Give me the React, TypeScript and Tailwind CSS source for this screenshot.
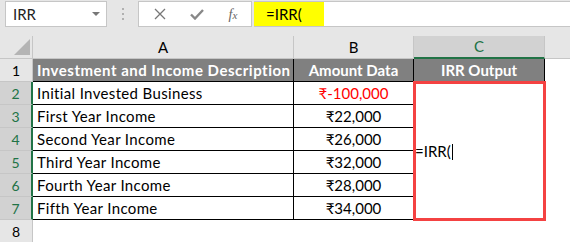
import React from "react";

const font = { fontFamily: "Lato, 'Noto Sans', 'DejaVu Sans', sans-serif" };

const rows = [
  { label: "Initial Invested Business", amount: "₹-100,000", negative: true },
  { label: "First Year Income", amount: "₹22,000" },
  { label: "Second Year Income", amount: "₹26,000" },
  { label: "Third Year Income", amount: "₹32,000" },
  { label: "Fourth Year Income", amount: "₹28,000" },
  { label: "Fifth Year Income", amount: "₹34,000" },
];

function FormulaBar() {
  return (
    <div className="flex h-[36px] items-start gap-0 pt-px">
      {/* Name box */}
      <div className="ml-[5px] flex h-[26px] w-[102px] items-center justify-between border border-[#c6c6c6] bg-white pl-[7px] pr-[6px]">
        <span className="text-[15px] text-[#222]">IRR</span>
        <svg width="8" height="5" viewBox="0 0 8 5">
          <path d="M0 0 L8 0 L4 4 Z" fill="#777" />
        </svg>
      </div>
      {/* grip */}
      <div className="flex h-[26px] w-[31px] flex-col items-center justify-center gap-[3px]">
        <div className="h-[2px] w-[2px] bg-[#b0b0b0]" />
        <div className="h-[2px] w-[2px] bg-[#b0b0b0]" />
        <div className="h-[2px] w-[2px] bg-[#b0b0b0]" />
      </div>
      {/* buttons */}
      <div className="flex h-[26px] w-[114px] items-center border border-[#c6c6c6] bg-white">
        <div className="flex w-[40px] justify-center pl-[2px]">
          <svg width="12" height="12" viewBox="0 0 12 12">
            <path d="M1 1 L11 11 M11 1 L1 11" stroke="#777" strokeWidth="1.3" />
          </svg>
        </div>
        <div className="flex w-[36px] justify-center">
          <svg width="14" height="11" viewBox="0 0 14 11">
            <path d="M1 5.5 L5 9.5 L13 1" stroke="#888" strokeWidth="2.4" fill="none" />
          </svg>
        </div>
        <div className="flex w-[36px] justify-center">
          <span className="text-[14px] italic text-[#666]" style={{ fontFamily: "'Liberation Serif', serif" }}>
            f<span className="text-[11px]">x</span>
          </span>
        </div>
      </div>
      {/* formula input */}
      <div className="ml-[2px] flex h-[26px] flex-1 items-center border-y border-[#c6c6c6] bg-white">
        <div className="flex h-[24px] w-[70px] items-center bg-[#ffff00] pl-[12px] text-[15px] text-black">=IRR(</div>
      </div>
    </div>
  );
}

export default function App() {
  const headCell = "flex items-center justify-center border-r border-[#c6c6c6] text-[15px]";
  const rowHead = "flex items-center justify-center border-b border-[#c6c6c6] text-[14px]";
  return (
    <div className="h-[242px] w-[570px] overflow-hidden bg-[#e6e6e6]" style={font}>
      <FormulaBar />
      <div className="grid grid-cols-[33px_261px_120px_131px_1fr] grid-rows-[23px_23px_23px_23px_23px_23px_23px_23px_23px] bg-white">
        {/* column header row */}
        <div className="relative border-r border-b border-[#c6c6c6] bg-[#e6e6e6]">
          <svg className="absolute bottom-[3px] right-[2px]" width="16" height="16" viewBox="0 0 16 16">
            <path d="M16 0 L16 16 L0 16 Z" fill="#b4b4b4" />
          </svg>
        </div>
        <div className={`${headCell} border-b bg-[#e6e6e6] text-black`}>A</div>
        <div className={`${headCell} border-b bg-[#e6e6e6] text-black`}>B</div>
        <div className={`${headCell} border-b-2 border-b-[#217346] bg-[#d2d2d2] text-[#217346]`}>C</div>
        <div className="border-b border-[#c6c6c6] bg-[#e6e6e6]" />

        {/* row 1 */}
        <div className={`${rowHead} border-r bg-[#e6e6e6] text-black`}>1</div>
        <div className="flex items-center border-r border-b border-black bg-[#808080] pl-[4px] text-[15px] font-bold tracking-[0.5px] whitespace-nowrap text-white">
          Investment and Income Description
        </div>
        <div className="flex items-center justify-center border-r border-b border-black bg-[#808080] text-[15px] font-bold text-white">
          Amount Data
        </div>
        <div className="flex items-center justify-center border-r border-b border-black bg-[#808080] text-[15px] font-bold text-white">
          IRR Output
        </div>
        <div className="bg-white" />

        {/* rows 2-7 */}
        {rows.map((r, i) => (
          <React.Fragment key={r.label}>
            <div
              className={`${rowHead} border-r-2 border-r-[#217346] bg-[#d2d2d2] text-[#217346]`}
              style={{ gridRow: i + 3, gridColumn: 1 }}
            >
              {i + 2}
            </div>
            <div
              className="flex items-center border-r border-b border-black pl-[4px] text-[15px] tracking-[0.35px] whitespace-nowrap text-black"
              style={{ gridRow: i + 3, gridColumn: 2 }}
            >
              {r.label}
            </div>
            <div
              className={`flex items-center justify-center border-r border-b border-black text-[15px] ${r.negative ? "text-[#ff0000]" : "text-black"}`}
              style={{ gridRow: i + 3, gridColumn: 3 }}
            >
              {r.amount}
            </div>
          </React.Fragment>
        ))}

        {/* merged C2:C7 in edit mode */}
        <div className="relative col-start-4 row-span-6 row-start-3 flex items-center bg-white">
          <span className="pl-px text-[15px] text-black">
            =IRR(<span className="ml-px inline-block h-[16px] w-px translate-y-[3px] bg-black" />
          </span>
          <div className="pointer-events-none absolute -top-[1px] -left-[1px] -right-[1px] -bottom-[1px] border-[3px] border-[#f44242]" />
        </div>
        <div className="col-start-5 row-span-6 row-start-3 bg-white" />

        {/* row 8 */}
        <div className={`${rowHead} border-r bg-[#e6e6e6] text-black`}>8</div>
        <div className="col-span-4 bg-white" />
      </div>
    </div>
  );
}
